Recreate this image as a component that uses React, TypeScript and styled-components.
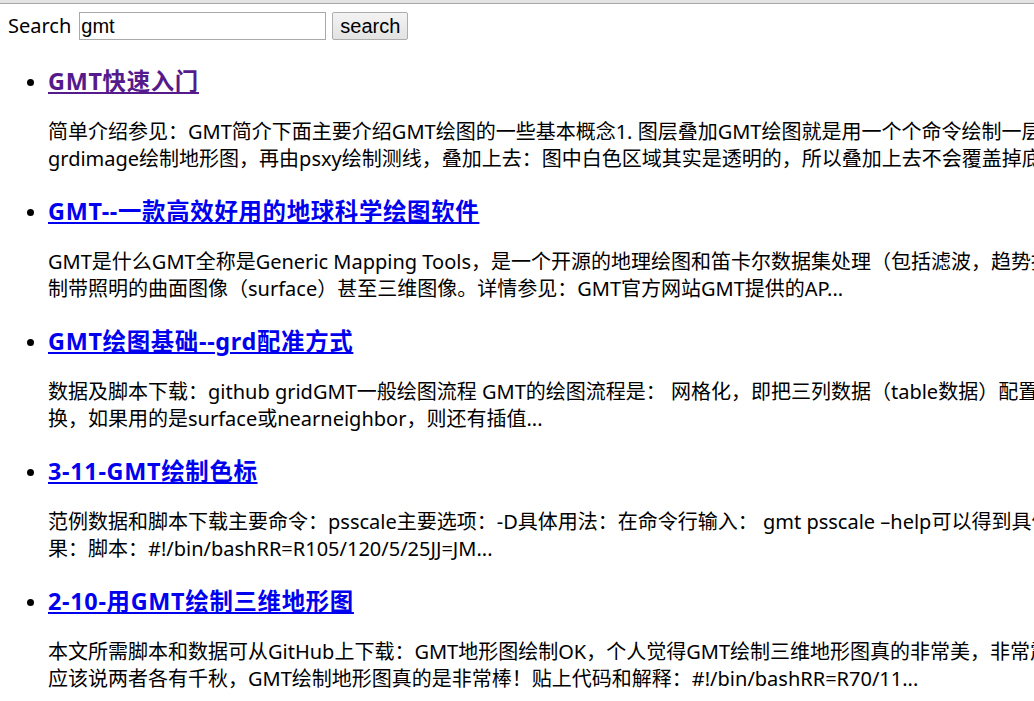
import styled, { createGlobalStyle } from "styled-components";

const GlobalStyle = createGlobalStyle`
  html, body {
    margin: 0;
    padding: 0;
    background: #ffffff;
    overflow: hidden;
  }
  body {
    font-family: "Noto Sans", "Noto Sans CJK SC", sans-serif;
    font-size: 20px;
    color: #000000;
  }
`;

const Frame = styled.div`
  border-top: 3px solid #e3e3e3;
  box-shadow: inset 0 1px 0 #a8a8a8;
  padding: 9px 8px 8px;
`;

const SearchForm = styled.form`
  display: flex;
  align-items: center;
  height: 28px;
`;

const Label = styled.label`
  font-size: 20px;
  line-height: 28px;
  margin-right: 8px;
`;

const SearchInput = styled.input`
  box-sizing: border-box;
  width: 247px;
  height: 28px;
  padding: 0 1px;
  border: 1px solid #a9a9a9;
  font-family: "Liberation Sans", Arial, sans-serif;
  font-size: 20px;
  color: #000;
  outline: none;
`;

const SearchButton = styled.button`
  box-sizing: border-box;
  width: 76px;
  height: 28px;
  margin-left: 6px;
  padding: 0;
  border: 1px solid #adadad;
  border-radius: 2px;
  background: linear-gradient(#f3f3f3, #e2e2e2);
  font-family: "Liberation Sans", Arial, sans-serif;
  font-size: 20px;
  color: #000;
`;

const ResultList = styled.ul`
  margin: 26px 0 0;
  padding-left: 40px;
  list-style: disc;
`;

const Result = styled.li`
  & + & {
    margin-top: 24.5px;
  }
`;

const Title = styled.h3`
  margin: 0;
  font-size: 23.4px;
  line-height: 30px;
  font-weight: bold;
  letter-spacing: 0.7px;
`;

const TitleLink = styled.a<{ visited?: boolean }>`
  color: ${(p) => (p.visited ? "#551a8b" : "#0000ee")};
  text-decoration: underline;
`;

const Summary = styled.p`
  margin: 21.5px 0 0;
  line-height: 27px;
  white-space: nowrap;

  span {
    display: block;
  }
`;

const results = [
  {
    title: "GMT快速入门",
    visited: true,
    lines: [
      "简单介绍参见：GMT简介下面主要介绍GMT绘图的一些基本概念1. 图层叠加GMT绘图就是用一个个命令绘制一层一层的图层，如先用",
      "grdimage绘制地形图，再由psxy绘制测线，叠加上去：图中白色区域其实是透明的，所以叠加上去不会覆盖掉底图...",
    ],
  },
  {
    title: "GMT--一款高效好用的地球科学绘图软件",
    lines: [
      "GMT是什么GMT全称是Generic Mapping Tools，是一个开源的地理绘图和笛卡尔数据集处理（包括滤波，趋势拟合，网格化，投影等）的工具集，可以绘",
      "制带照明的曲面图像（surface）甚至三维图像。详情参见：GMT官方网站GMT提供的AP...",
    ],
  },
  {
    title: "GMT绘图基础--grd配准方式",
    lines: [
      "数据及脚本下载：github gridGMT一般绘图流程 GMT的绘图流程是： 网格化，即把三列数据（table数据）配置成网格数据，涉及到投影变",
      "换，如果用的是surface或nearneighbor，则还有插值...",
    ],
  },
  {
    title: "3-11-GMT绘制色标",
    lines: [
      "范例数据和脚本下载主要命令：psscale主要选项：-D具体用法：在命令行输入： gmt psscale –help可以得到具体的用法。效",
      "果：脚本：#!/bin/bashRR=R105/120/5/25JJ=JM...",
    ],
  },
  {
    title: "2-10-用GMT绘制三维地形图",
    lines: [
      "本文所需脚本和数据可从GitHub上下载：GMT地形图绘制OK，个人觉得GMT绘制三维地形图真的非常美，非常震撼，与ArcGIS相比，",
      "应该说两者各有千秋，GMT绘制地形图真的是非常棒！贴上代码和解释：#!/bin/bashRR=R70/11...",
    ],
  },
];

export default function App() {
  return (
    <Frame>
      <GlobalStyle />
      <SearchForm onSubmit={(e) => e.preventDefault()}>
        <Label htmlFor="q">Search</Label>
        <SearchInput id="q" defaultValue="gmt" />
        <SearchButton type="submit">search</SearchButton>
      </SearchForm>
      <ResultList>
        {results.map((r) => (
          <Result key={r.title}>
            <Title>
              <TitleLink href="#" visited={r.visited}>
                {r.title}
              </TitleLink>
            </Title>
            <Summary>
              {r.lines.map((l) => (
                <span key={l}>{l}</span>
              ))}
            </Summary>
          </Result>
        ))}
      </ResultList>
    </Frame>
  );
}
